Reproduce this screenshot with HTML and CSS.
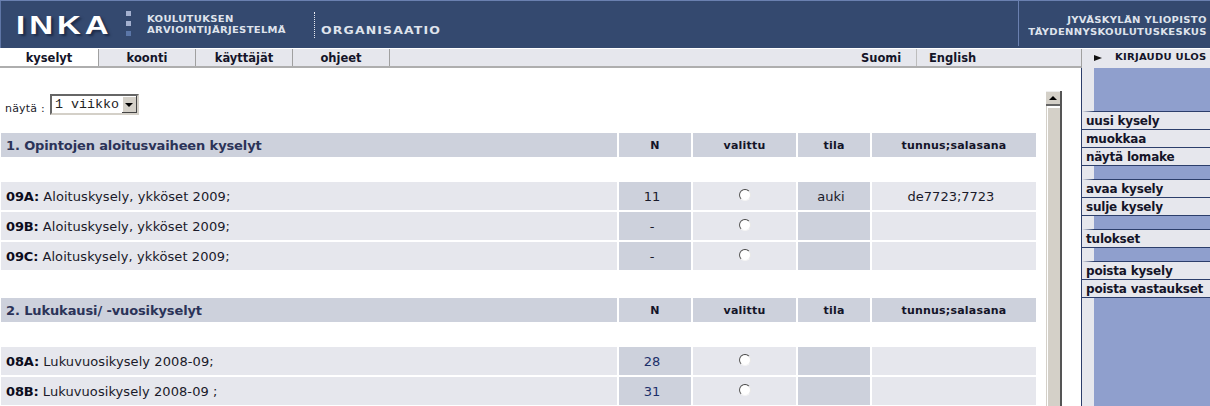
FILE: index.html
```html
<!DOCTYPE html>
<html lang="fi">
<head>
    <meta charset="UTF-8">
    <title>INKA - Organisaatio</title>
    <link rel="stylesheet" href="styles.css">
</head>
<body>
    <!-- Header -->
    <header class="top">
        <div class="logo"><span>INKA</span></div>
        <div class="dots"><span></span><span></span><span class="dark"></span></div>
        <div class="system"><span class="wide">KOULUTUKSEN<br>ARVIOINTIJÄRJESTELMÄ</span></div>
        <div class="divider"></div>
        <div class="role"><span class="wide">ORGANISAATIO</span></div>
        <div class="owner"><span class="wide">JYVÄSKYLÄN YLIOPISTO<br>TÄYDENNYSKOULUTUSKESKUS</span></div>
    </header>

    <!-- Navigation -->
    <nav class="menu">
        <a class="tab active" href="#">kyselyt</a>
        <a class="tab" href="#">koonti</a>
        <a class="tab" href="#">käyttäjät</a>
        <a class="tab" href="#">ohjeet</a>
        <div class="spacer"></div>
        <a class="lang" href="#">Suomi</a>
        <a class="lang en" href="#">English</a>
        <a class="logout" href="#"><span class="arrow"></span><span class="wide">KIRJAUDU ULOS</span></a>
    </nav>

    <div class="page">
        <main class="content">
            <div class="filter">
                <label>näytä :</label>
                <div class="select"><span class="value">1 viikko</span><span class="drop"><i></i></span></div>
            </div>

            <table class="surveys">
                <tr class="head">
                    <th class="title">1. Opintojen aloitusvaiheen kyselyt</th>
                    <th class="c-n">N</th><th class="c-sel">valittu</th><th class="c-state">tila</th><th class="c-code">tunnus;salasana</th>
                </tr>
                <tr class="gap"><td colspan="5"></td></tr>
                <tr>
                    <td class="name"><b>09A:</b> Aloituskysely, ykköset 2009;</td>
                    <td class="dark">11</td><td class="pick"><input type="radio" name="k"></td><td class="dark">auki</td><td>de7723;7723</td>
                </tr>
                <tr>
                    <td class="name"><b>09B:</b> Aloituskysely, ykköset 2009;</td>
                    <td class="dark">-</td><td class="pick"><input type="radio" name="k"></td><td class="dark"></td><td></td>
                </tr>
                <tr>
                    <td class="name"><b>09C:</b> Aloituskysely, ykköset 2009;</td>
                    <td class="dark">-</td><td class="pick"><input type="radio" name="k"></td><td class="dark"></td><td></td>
                </tr>
                <tr class="gap section"><td colspan="5"></td></tr>
                <tr class="head">
                    <th class="title">2. Lukukausi/ -vuosikyselyt</th>
                    <th>N</th><th>valittu</th><th>tila</th><th>tunnus;salasana</th>
                </tr>
                <tr class="gap"><td colspan="5"></td></tr>
                <tr>
                    <td class="name"><b>08A:</b> Lukuvuosikysely 2008-09;</td>
                    <td class="dark link">28</td><td class="pick"><input type="radio" name="k"></td><td class="dark"></td><td></td>
                </tr>
                <tr>
                    <td class="name"><b>08B:</b> Lukuvuosikysely 2008-09 ;</td>
                    <td class="dark link">31</td><td class="pick"><input type="radio" name="k"></td><td class="dark"></td><td></td>
                </tr>
            </table>
        </main>

        <!-- Scrollbar of the list frame -->
        <div class="scrollbar">
            <div class="up"><i></i></div>
            <div class="thumb"></div>
        </div>

        <!-- Actions -->
        <aside class="actions">
            <div class="blank first"></div>
            <a href="#">uusi kysely</a>
            <a href="#">muokkaa</a>
            <a href="#">näytä lomake</a>
            <div class="blank"></div>
            <a href="#">avaa kysely</a>
            <a href="#">sulje kysely</a>
            <div class="blank"></div>
            <a href="#">tulokset</a>
            <div class="blank"></div>
            <a href="#">poista kysely</a>
            <a href="#">poista vastaukset</a>
            <div class="blank last"></div>
        </aside>
    </div>
</body>
</html>
```

FILE: styles.css
```css
/* Global styles */
html, body {
    height: 406px;
    overflow: hidden;
}
body {
    margin: 0;
    font-family: "DejaVu Sans", Verdana, sans-serif;
    font-size: 13px;
    color: #1a1a2a;
    background-color: white;
}
a {
    color: inherit;
    text-decoration: none;
}

/* Header */
.top {
    display: flex;
    height: 47px;
    background-color: #34496f;
    border-top: 1px solid #6a80b0;
    color: #dfe3ec;
    box-shadow: inset 1px 0 0 #5f76a6;
}
.wide {
    display: inline-block;
    transform: scaleX(1.25);
    transform-origin: left;
}
.logo {
    width: 110px;
    padding: 10px 0 0 16px;
    box-sizing: content-box;
    font-family: "Liberation Sans", sans-serif;
    font-size: 25px;
    font-weight: bold;
    line-height: 28px;
    letter-spacing: 3px;
    color: white;
}
.logo span {
    display: inline-block;
    transform: scaleX(1.32);
    transform-origin: left;
    text-shadow: 2px 2px 2px #1e2c4a;
}
.dots {
    display: flex;
    flex-direction: column;
    gap: 5px;
    width: 5px;
    margin: 10px 16px 0 0;
}
.dots span {
    width: 5px;
    height: 5px;
    background-color: #a4b1d0;
}
.dots .dark {
    background-color: #5b76a8;
}
.system {
    width: 167px;
    padding-top: 13px;
    font-size: 8px;
    font-weight: bold;
    line-height: 11px;
    letter-spacing: 0.25px;
    white-space: nowrap;
}
.divider {
    width: 0;
    height: 26px;
    margin: 11px 6px 0 0;
    border-left: 1px dotted #e8ebf2;
}
.role {
    flex: 1;
    padding-top: 24px;
    font-size: 10px;
    font-weight: bold;
    line-height: 12px;
    letter-spacing: 0.9px;
}
.owner {
    width: 192px;
    height: 45px;
    padding: 14px 3px 0 0;
    box-sizing: border-box;
    border-left: 1px solid #6a80b0;
    font-size: 8px;
    font-weight: bold;
    line-height: 12px;
    letter-spacing: 0.25px;
    text-align: right;
    white-space: nowrap;
}
.owner .wide {
    transform-origin: right;
}

/* Navigation */
.menu {
    display: flex;
    height: 17px;
    background-color: #e6e7ed;
    border-top: 1px solid white;
    border-bottom: 2px solid #aeaeae;
    font-size: 11.5px;
    font-weight: bold;
    line-height: 18px;
    color: #141428;
}
.tab {
    width: 96px;
    border-right: 1px solid #a0a0a0;
    text-align: center;
}
.tab.active {
    width: 98px;
    background-color: white;
}
.spacer {
    flex: 1;
}
.lang {
    width: 55px;
}
.lang.en {
    width: 165px;
    padding-left: 12px;
    box-sizing: border-box;
    border-left: 1px solid #bdbdbd;
}
.logout {
    display: flex;
    align-items: center;
    width: 129px;
    height: 19px;
    padding: 0 0 1px 12px;
    box-sizing: border-box;
    border-left: 1px solid #a0a0a0;
    background-color: #e6e7ed;
    font-size: 8px;
    line-height: 10px;
    letter-spacing: 0.2px;
    white-space: nowrap;
}
.arrow {
    width: 0;
    height: 0;
    margin: 0 13px 0 0;
    border-left: 8px solid #111;
    border-top: 3px solid transparent;
    border-bottom: 3px solid transparent;
}

/* Page body */
.page {
    display: flex;
    height: 338px;
}
.content {
    width: 1046px;
    overflow: hidden;
}

/* Filter row */
.filter {
    display: flex;
    align-items: flex-end;
    height: 47px;
    padding-left: 5px;
    font-size: 11px;
    line-height: 13px;
}
.filter label {
    margin: 0 5px 0 0;
    letter-spacing: 0.2px;
}
.select {
    display: flex;
    width: 89px;
    height: 21px;
    box-sizing: border-box;
    border: 2px solid;
    border-color: #666 #d4d0c8 #d4d0c8 #666;
    background-color: white;
}
.value {
    flex: 1;
    padding-left: 3px;
    font-family: "Liberation Mono", monospace;
    font-size: 13.33px;
    line-height: 17px;
    color: #222;
}
.drop {
    display: flex;
    align-items: center;
    justify-content: center;
    width: 15px;
    background-color: #d4d0c8;
    box-shadow: inset -1px -1px 0 #444, inset 1px 1px 0 #fff;
}
.drop i {
    border-top: 4px solid #000;
    border-left: 4px solid transparent;
    border-right: 4px solid transparent;
}

/* Survey table */
.surveys {
    width: 1039px;
    margin: 16px 0 0 -1px;
    table-layout: fixed;
    border-collapse: separate;
    border-spacing: 2px;
}
.surveys th {
    height: 24px;
    padding: 0;
    background-color: #cdd1dc;
    font-size: 11px;
    letter-spacing: 0.2px;
    color: #141428;
}
.surveys th.title {
    width: 611px;
    height: 23px;
    padding: 1px 0 0 5px;
    font-size: 13px;
    letter-spacing: -0.12px;
    text-align: left;
    color: #2b3358;
}
.surveys td {
    height: 27px;
    padding: 1px 6px 0 0;
    background-color: #e6e7ed;
    text-align: center;
}
.surveys td.name {
    padding-left: 5px;
    letter-spacing: 0.08px;
    text-align: left;
}
.surveys td.pick {
    height: 28px;
    padding: 0;
}
.surveys td.dark {
    background-color: #cdd1dc;
}
.surveys td.link {
    color: #1c2f6a;
}
.surveys b {
    letter-spacing: -0.15px;
    color: #0c0c1c;
}
.surveys .gap td {
    height: 21px;
    padding: 0;
    background-color: white;
}
.surveys .gap.section td {
    height: 24px;
}
.c-n {
    width: 72px;
}
.c-sel {
    width: 103px;
}
.c-state {
    width: 72px;
}
.c-code {
    width: 164px;
}
input[type="radio"] {
    display: block;
    width: 12px;
    height: 12px;
    margin: -3px auto 0;
    appearance: none;
    box-sizing: border-box;
    border: 1px solid;
    border-color: #444 #e8e8e8 #f4f4f4 #555;
    border-radius: 50%;
    background-color: white;
}

/* Scrollbar */
.scrollbar {
    display: flex;
    flex-direction: column;
    width: 16px;
    margin-top: 23px;
    border-right: 2px solid #555;
    border-left: 1px solid #d4d0c8;
    box-sizing: border-box;
}
.up {
    display: flex;
    align-items: center;
    justify-content: center;
    height: 15px;
    margin-left: -1px;
    background-color: #d4d0c8;
    border-bottom: 2px solid #666;
    border-top: 1px solid #eee;
    box-sizing: border-box;
}
.up i {
    border-bottom: 4px solid #000;
    border-left: 4px solid transparent;
    border-right: 4px solid transparent;
}
.thumb {
    flex: 1;
    margin-top: 2px;
    margin-left: 1px;
    background-color: #d4d0c8;
}

/* Action column */
.actions {
    display: flex;
    flex-direction: column;
    width: 129px;
    margin-left: 19px;
    box-sizing: border-box;
    border-left: 1px solid #2c3e6b;
    font-size: 12px;
    font-weight: bold;
    letter-spacing: -0.2px;
    color: #141428;
}
.actions a {
    height: 18px;
    padding-left: 4px;
    box-sizing: border-box;
    border-bottom: 1px solid #2c3e6b;
    background-color: #e6e7ed;
    line-height: 19px;
}
.blank {
    height: 14px;
    box-sizing: border-box;
    border-left: 12px solid #e6e7ed;
    border-bottom: 1px solid #2c3e6b;
    background-color: #8f9fcd;
}
.blank.first {
    height: 44px;
}
.blank.last {
    flex: 1;
    border-bottom: none;
}
```
